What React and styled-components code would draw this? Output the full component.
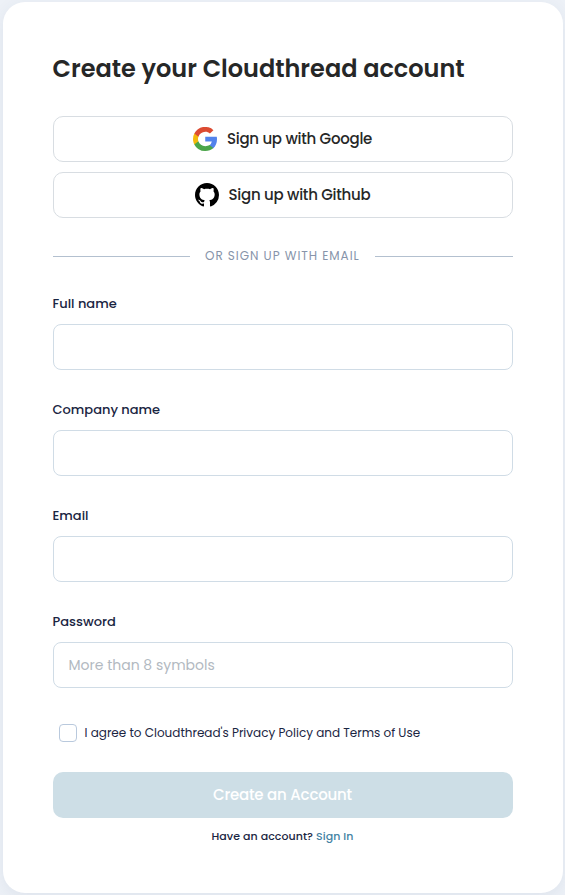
import React from "react";
import styled, { createGlobalStyle } from "styled-components";

const GlobalStyle = createGlobalStyle`
  *, *::before, *::after { box-sizing: border-box; }
  body {
    margin: 0;
    overflow: hidden;
    background: #edf1f7;
    font-family: Poppins, Inter, sans-serif;
    color: #1a2542;
  }
`;

const Page = styled.main`
  height: 895px;
  padding: 2px 2px 2px 3px;
`;

const Card = styled.section`
  height: 891px;
  padding: 50px 50px 0;
  border-radius: 22px;
  background: #fff;
  box-shadow: 0 4px 16px rgba(45, 75, 110, 0.08);
`;

const Title = styled.h1`
  margin: 0 0 0 -0.5px;
  height: 34px;
  line-height: 34px;
  font-size: 24px;
  font-weight: 600;
  color: #262727;
  white-space: nowrap;
`;

const Providers = styled.div`
  display: grid;
  gap: 10px;
  margin-top: 30px;
`;

const ProviderButton = styled.button`
  display: flex;
  align-items: center;
  justify-content: center;
  gap: 10px;
  height: 46px;
  padding: 0 1px 0 0;
  border: 1px solid #d8dde2;
  border-radius: 10px;
  background: #fff;
  color: #262727;
  font: 500 15px Poppins, Inter, sans-serif;
  letter-spacing: -0.27px;
  white-space: nowrap;

  span {
    margin-bottom: 2px;
  }
`;

const Divider = styled.div`
  display: flex;
  align-items: center;
  gap: 15px;
  height: 18px;
  margin-top: 29px;
  font-size: 12px;
  letter-spacing: 0.96px;
  color: #8794aa;
  white-space: nowrap;

  &::before, &::after {
    content: "";
    flex: 1;
    height: 1px;
    background: #b3c0cf;
  }

  &::before {
    flex: 0 0 137px;
  }
`;

const Form = styled.form`
  display: flex;
  flex-direction: column;
  margin-top: 28px;
`;

const Field = styled.label`
  display: flex;
  flex-direction: column;
  height: 106px;
`;

const FieldLabel = styled.span`
  height: 21px;
  margin: 0 0 10px -0.5px;
  line-height: 22px;
  font-size: 13px;
  font-weight: 500;
`;

const Input = styled.input`
  width: 100%;
  height: 46px;
  padding: 0 14.5px;
  border: 1px solid #d0dce6;
  border-radius: 8px;
  background: #fff;
  font: 400 14px Poppins, Inter, sans-serif;
  outline: none;

  &::placeholder {
    color: #b2b9c1;
    opacity: 1;
  }
`;

const Agreement = styled.label`
  display: flex;
  align-items: center;
  gap: 7.5px;
  height: 18px;
  margin: 7px 0 0 6px;
  font-size: 12px;
  white-space: nowrap;
`;

const Checkbox = styled.input`
  appearance: none;
  width: 18px;
  height: 18px;
  margin: 0;
  border: 1px solid #b9c9dd;
  border-radius: 4px;
  background: #fff;
`;

const SubmitButton = styled.button`
  height: 46px;
  margin-top: 30px;
  padding: 0 1px 2px 0;
  border: 0;
  border-radius: 10px;
  background: #cddee6;
  color: #fff;
  font: 500 15px Poppins, Inter, sans-serif;
  letter-spacing: -0.2px;
`;

const Footer = styled.p`
  margin: 9px 0 0;
  height: 18px;
  line-height: 18px;
  padding-right: 1px;
  text-align: center;
  font-size: 11px;
  font-weight: 500;
  letter-spacing: 0.06px;
`;

const SignIn = styled.a`
  color: #4482a3;
`;

const GoogleIcon = () => (
  <svg width="24" height="24" viewBox="0 0 24 24" aria-hidden="true">
    <path fill="#5383ec" d="M24 12.27c0-.85-.08-1.67-.22-2.45H12.24v4.64h6.6a5.64 5.64 0 0 1-2.45 3.7v3.01h3.95C22.66 19.04 24 15.95 24 12.27z" />
    <path fill="#4ba54a" d="M12.24 24c3.31 0 6.08-1.08 8.1-2.92l-3.95-3.01c-1.09.72-2.49 1.15-4.15 1.15-3.19 0-5.89-2.11-6.86-4.95H1.3v3.11A12.24 12.24 0 0 0 12.24 24z" />
    <path fill="#f3b90b" d="M5.38 14.27A7.2 7.2 0 0 1 5 12c0-.79.14-1.55.38-2.27V6.62H1.3A11.8 11.8 0 0 0 0 12c0 1.94.47 3.77 1.3 5.38z" />
    <path fill="#dc4b32" d="M12.24 4.77c1.8 0 3.41.61 4.68 1.8l3.51-3.44A12.1 12.1 0 0 0 1.3 6.62l4.08 3.11c.97-2.84 3.67-4.96 6.86-4.96z" />
  </svg>
);

const GithubIcon = () => (
  <svg width="24" height="24" viewBox="0 0 16 16" aria-hidden="true">
    <path fill="#000" fillRule="evenodd" d="M8 0C3.58 0 0 3.58 0 8c0 3.54 2.29 6.53 5.47 7.59.4.07.55-.17.55-.38 0-.19-.01-.82-.01-1.49-2.01.37-2.53-.49-2.69-.94-.09-.23-.48-.94-.82-1.13-.28-.15-.68-.52-.01-.53.63-.01 1.08.58 1.23.82.72 1.21 1.87.87 2.33.66.07-.52.28-.87.51-1.07-1.78-.2-3.64-.89-3.64-3.95 0-.87.31-1.59.82-2.15-.08-.2-.36-1.02.08-2.12 0 0 .67-.21 2.2.82.64-.18 1.32-.27 2-.27s1.36.09 2 .27c1.53-1.04 2.2-.82 2.2-.82.44 1.1.16 1.92.08 2.12.51.56.82 1.27.82 2.15 0 3.07-1.87 3.75-3.65 3.95.29.25.54.73.54 1.48 0 1.07-.01 1.93-.01 2.2 0 .21.15.46.55.38A8.01 8.01 0 0 0 16 8c0-4.42-3.58-8-8-8z" />
  </svg>
);

const fields = [
  { label: "Full name", name: "name" },
  { label: "Company name", name: "company" },
  { label: "Email", name: "email" },
  { label: "Password", name: "password", type: "password", placeholder: "More than 8 symbols" },
];

export default function App() {
  return (
    <>
      <GlobalStyle />
      <Page>
        <Card>
          <Title>Create your Cloudthread account</Title>
          <Providers>
            <ProviderButton type="button">
              <GoogleIcon />
              <span>Sign up with Google</span>
            </ProviderButton>
            <ProviderButton type="button">
              <GithubIcon />
              <span>Sign up with Github</span>
            </ProviderButton>
          </Providers>
          <Divider>OR SIGN UP WITH EMAIL</Divider>
          <Form>
            {fields.map(({ label, name, type = "text", placeholder }) => (
              <Field key={name}>
                <FieldLabel>{label}</FieldLabel>
                <Input name={name} type={type} placeholder={placeholder} />
              </Field>
            ))}
            <Agreement>
              <Checkbox type="checkbox" />
              <span>I agree to Cloudthread's Privacy Policy and Terms of Use</span>
            </Agreement>
            <SubmitButton type="button">Create an Account</SubmitButton>
            <Footer>
              Have an account? <SignIn>Sign In</SignIn>
            </Footer>
          </Form>
        </Card>
      </Page>
    </>
  );
}
